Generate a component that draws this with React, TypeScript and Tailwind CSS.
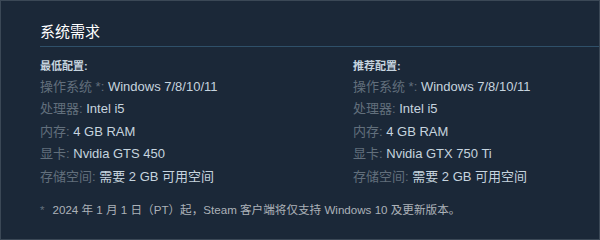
const font = { fontFamily: '"Liberation Sans", Arial, "Noto Sans CJK SC", sans-serif' };

type Row = { label: string; value: string };

const minimum: Row[] = [
  { label: "操作系统 *:", value: "Windows 7/8/10/11" },
  { label: "处理器:", value: "Intel i5" },
  { label: "内存:", value: "4 GB RAM" },
  { label: "显卡:", value: "Nvidia GTS 450" },
  { label: "存储空间:", value: "需要 2 GB 可用空间" },
];

const recommended: Row[] = [
  { label: "操作系统 *:", value: "Windows 7/8/10/11" },
  { label: "处理器:", value: "Intel i5" },
  { label: "内存:", value: "4 GB RAM" },
  { label: "显卡:", value: "Nvidia GTX 750 Ti" },
  { label: "存储空间:", value: "需要 2 GB 可用空间" },
];

function SpecColumn({ title, rows }: { title: string; rows: Row[] }) {
  return (
    <div className="flex flex-col">
      <div className="text-[11px] font-bold text-[#c6d4df] leading-[14px] mb-[3px]">{title}</div>
      <ul className="flex flex-col">
        {rows.map(r => (
          <li key={r.label} className="text-[13px] leading-[22.4px] whitespace-nowrap">
            <span className="text-[#626f7c]">{r.label}</span>
            <span className="text-[#c6d4df]"> {r.value}</span>
          </li>
        ))}
      </ul>
    </div>
  );
}

export default function App() {
  return (
    <div
      className="w-[600px] h-[240px] bg-[#1b2838] border border-[#3b4856] overflow-hidden"
      style={font}
    >
      <div className="pl-[39px] pt-[21px]">
        <h2 className="text-[15px] text-white leading-[20px] pb-[4px] border-b border-[#2f5069]">系统需求</h2>
        <div className="grid grid-cols-[313px_1fr] mt-[12px]">
          <SpecColumn title="最低配置:" rows={minimum} />
          <SpecColumn title="推荐配置:" rows={recommended} />
        </div>
        <p className="text-[11.6px] text-[#acb2b8] mt-[14px] leading-[16px]">
          <span className="text-[#626f7c] mr-[8px]">*</span>2024 年 1 月 1 日（PT）起，Steam 客户端将仅支持 Windows 10 及更新版本。
        </p>
      </div>
    </div>
  );
}
